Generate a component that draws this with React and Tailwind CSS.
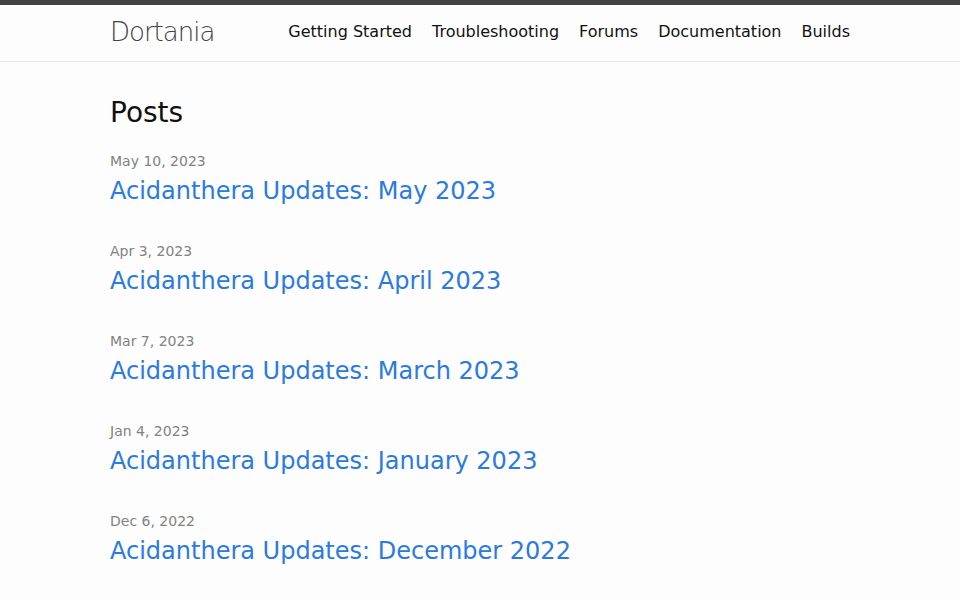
const navLinks = ["Getting Started", "Troubleshooting", "Forums", "Documentation", "Builds"];

const posts = [
  { date: "May 10, 2023", title: "Acidanthera Updates: May 2023" },
  { date: "Apr 3, 2023", title: "Acidanthera Updates: April 2023" },
  { date: "Mar 7, 2023", title: "Acidanthera Updates: March 2023" },
  { date: "Jan 4, 2023", title: "Acidanthera Updates: January 2023" },
  { date: "Dec 6, 2022", title: "Acidanthera Updates: December 2022" },
];

const App = () => {
  return (
    <div className="min-h-screen bg-[#fdfdfd] text-[#111] font-['DejaVu_Sans',sans-serif] text-[16px] leading-[1.5]">
      <header className="border-t-[5px] border-t-[#424242] border-b border-b-[#e8e8e8] min-h-[62px]">
        <div className="max-w-[800px] mx-auto px-[30px] flex justify-between items-center">
          <a href="#" className="text-[26px] font-light leading-[54px] tracking-[-1px] text-[#424242]">
            Dortania
          </a>
          <nav className="flex gap-5 leading-[54px]">
            {navLinks.map((link) => (
              <a key={link} href="#" className="text-[#111]">
                {link}
              </a>
            ))}
          </nav>
        </div>
      </header>

      <main className="py-[30px]">
        <div className="max-w-[800px] mx-auto px-[30px]">
          <h1 className="text-[28px] font-normal mb-[17px]">Posts</h1>
          <ul>
            {posts.map((post) => (
              <li key={post.title} className="mb-[32px]">
                <span className="block text-[14px] text-[#828282]">{post.date}</span>
                <h3 className="mt-px">
                  <a href="#" className="block text-[24px] text-[#2a7ae2]">
                    {post.title}
                  </a>
                </h3>
              </li>
            ))}
          </ul>
        </div>
      </main>
    </div>
  );
};

export default App;
